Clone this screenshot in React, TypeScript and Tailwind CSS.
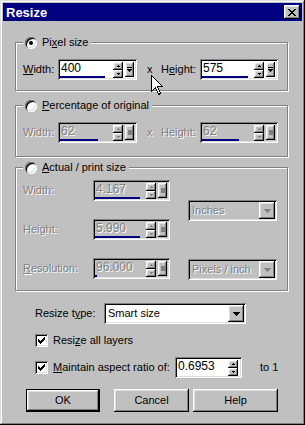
import React, { FC, ReactNode } from "react";

const raised =
  "shadow-[inset_-1px_-1px_#000,inset_1px_1px_#fff,inset_-2px_-2px_#808080,inset_2px_2px_#dfdfdf]";
const sunken =
  "shadow-[inset_1px_1px_#808080,inset_-1px_-1px_#fff,inset_2px_2px_#000,inset_-2px_-2px_#dfdfdf]";
const dim = "text-[#808080] [text-shadow:1px_1px_#fff]";

const Tri: FC<{ up?: boolean; disabled?: boolean; size?: number }> = ({ up, disabled, size = 5 }) => {
  const h = Math.ceil(size / 2);
  const pts = up ? `0,${h} ${size},${h} ${size / 2},0` : `0,0 ${size},0 ${size / 2},${h}`;
  return (
    <svg width={size} height={h} viewBox={`0 0 ${size} ${h}`} shapeRendering="crispEdges">
      <polygon points={pts} fill={disabled ? "#808080" : "#000"} />
    </svg>
  );
};

const Radio: FC<{ checked?: boolean }> = ({ checked }) => (
  <div className={`w-[12px] h-[12px] rounded-full bg-white flex items-center justify-center ${sunken}`}>
    {checked && <div className="w-[4px] h-[4px] rounded-full bg-black" />}
  </div>
);

const Check: FC = () => (
  <div className={`w-[13px] h-[13px] bg-white flex items-center justify-center ${sunken}`}>
    <svg width="7" height="7" viewBox="0 0 7 7" shapeRendering="crispEdges">
      <path d="M0 2h1v1h1v1h1v-1h1v-1h1v-1h1v-1h1v3h-1v1h-1v1h-1v1h-1v1h-1v-1h-1v-1h-1z" fill="#000" />
    </svg>
  </div>
);

// spin field with optional popup slider button
const SpinBox: FC<{
  value: string;
  w: string;
  bar: string;
  disabled?: boolean;
  popup?: boolean;
}> = ({ value, w, bar, disabled, popup = true }) => (
  <div className={`flex h-[21px] p-[2px] ${w} ${disabled ? "bg-[#c0c0c0]" : "bg-white"} ${sunken}`}>
    <div className="flex-1 flex flex-col justify-between min-w-0">
      <span className={`pl-[1px] text-[12px] leading-[15px] ${disabled ? dim : "text-black"}`}>{value}</span>
      <div className={`h-[2px] bg-[#000080] ${bar}`} />
    </div>
    <div className="flex flex-col justify-center mr-[2px]">
      <div className={`w-[10px] h-[8px] bg-[#c0c0c0] flex items-center justify-center ${raised}`}>
        <Tri up disabled={disabled} size={4} />
      </div>
      <div className={`w-[10px] h-[8px] bg-[#c0c0c0] flex items-center justify-center ${raised}`}>
        <Tri disabled={disabled} size={4} />
      </div>
    </div>
    {popup && (
      <div className={`w-[9px] h-[15px] self-center mr-[1px] bg-[#c0c0c0] flex flex-col items-center justify-center gap-[1px] ${raised}`}>
        {disabled ? (
          <div className="w-[4px] h-[5px] bg-[#808080]" />
        ) : (
          <>
            <div className="w-[5px] h-[1px] bg-black" />
            <Tri size={5} />
          </>
        )}
      </div>
    )}
  </div>
);

const Combo: FC<{ value: string; w: string; disabled?: boolean }> = ({ value, w, disabled }) => (
  <div className={`flex items-center h-[21px] p-[2px] ${w} ${disabled ? "bg-[#c0c0c0]" : "bg-white"} ${sunken}`}>
    <span className={`flex-1 pl-[2px] whitespace-nowrap ${disabled ? dim : "text-black"}`}>{value}</span>
    <div className={`w-[16px] h-[17px] bg-[#c0c0c0] flex items-center justify-center ${raised}`}>
      <Tri disabled={disabled} size={7} />
    </div>
  </div>
);

const Group: FC<{ label: ReactNode; checked?: boolean; cls: string; children: ReactNode }> = ({
  label,
  checked,
  cls,
  children,
}) => (
  <div className={`ml-[15px] w-[273px] border border-[#808080] shadow-[inset_1px_1px_#fff,1px_1px_#fff] ${cls}`}>
    <div className="-mt-[7px] ml-[7px] w-fit h-[13px] pl-[2px] pr-[3px] bg-[#c0c0c0] flex items-center gap-[5px]">
      <Radio checked={checked} />
      <span className="leading-[13px]">{label}</span>
    </div>
    {children}
  </div>
);

const Btn: FC<{ children: ReactNode; cls: string; def?: boolean }> = ({ children, cls, def }) => (
  <div className={`h-[23px] flex items-center justify-center bg-[#c0c0c0] ${cls} ${def ? "border border-black" : ""}`}>
    <div className={`w-full h-full flex items-center justify-center ${raised}`}>{children}</div>
  </div>
);

const App: FC = () => {
  return (
    <div
      className={`relative w-[305px] h-[425px] bg-[#c0c0c0] p-[3px] font-['Liberation_Sans',Arial,sans-serif] text-[11px] text-black shadow-[inset_-1px_-1px_#000,inset_1px_1px_#dfdfdf,inset_-2px_-2px_#808080,inset_2px_2px_#fff] overflow-hidden`}
    >
      {/* Title bar */}
      <div className="h-[18px] bg-[#000080] flex items-center justify-between pl-[3px] pr-[2px]">
        <span className="text-white font-bold text-[13px] leading-none">Resize</span>
        <div className={`w-[16px] h-[14px] bg-[#c0c0c0] flex items-center justify-center ${raised}`}>
          <svg width="8" height="7" viewBox="0 0 8 7" shapeRendering="crispEdges">
            <path d="M0 0h2v1h1v1h2v-1h1v-1h2v1h-1v1h-1v1h-1v1h1v1h1v1h1v1h-2v-1h-1v-1h-2v1h-1v1h-2v-1h1v-1h1v-1h1v-1h-1v-1h-1v-1h-1z" fill="#000" />
          </svg>
        </div>
      </div>

      <div className="-ml-[3px]">
        {/* Pixel size */}
        <Group
          checked
          cls="mt-[21px] h-[49px]"
          label={
            <>
              Pi<u>x</u>el size
            </>
          }
        >
          <div className="flex items-center mt-[10px] ml-[7px]">
            <span className="w-[35px]">
              <u>W</u>idth:
            </span>
            <SpinBox value="400" w="w-[79px]" bar="w-[45px]" />
            <span className="w-[10px]" />
            <span className="w-[14px]">x</span>
            <span className="w-[39px]">
              H<u>e</u>ight:
            </span>
            <SpinBox value="575" w="w-[78px]" bar="w-[46px]" />
          </div>
        </Group>

        {/* Percentage */}
        <Group
          cls="mt-[14px] h-[52px]"
          label={
            <>
              <u>P</u>ercentage of original
            </>
          }
        >
          <div className="flex items-center mt-[10px] ml-[7px]">
            <span className={`w-[35px] ${dim}`}>Width:</span>
            <SpinBox value="62" w="w-[79px]" bar="w-[38px]" disabled />
            <span className="w-[10px]" />
            <span className={`w-[14px] ${dim}`}>x</span>
            <span className={`w-[39px] ${dim}`}>Height:</span>
            <SpinBox value="62" w="w-[78px]" bar="w-[37px]" disabled />
          </div>
        </Group>

        {/* Actual / print size */}
        <Group
          cls="mt-[10px] h-[124px]"
          label={
            <>
              <u>A</u>ctual / print size
            </>
          }
        >
          <div className="flex ml-[7px]">
            <div className="flex flex-col w-[147px]">
              <div className="flex items-center mt-[6px]">
                <span className={`w-[70px] ${dim}`}>Width:</span>
                <SpinBox value="4.167" w="w-[77px]" bar="w-[45px]" disabled />
              </div>
              <div className="flex items-center mt-[18px]">
                <span className={`w-[70px] ${dim}`}>Height:</span>
                <SpinBox value="5.990" w="w-[77px]" bar="w-[45px]" disabled />
              </div>
              <div className="flex items-center mt-[18px]">
                <span className={`w-[70px] ${dim}`}>
                  <u>R</u>esolution:
                </span>
                <SpinBox value="96.000" w="w-[77px]" bar="w-[2px]" disabled />
              </div>
            </div>
            <div className="flex flex-col ml-[18px]">
              <div className="mt-[26px]">
                <Combo value="Inches" w="w-[89px]" disabled />
              </div>
              <div className="mt-[38px]">
                <Combo value="Pixels / inch" w="w-[89px]" disabled />
              </div>
            </div>
          </div>
        </Group>

        {/* Resize type */}
        <div className="flex items-center mt-[12px] ml-[35px]">
          <span className="w-[69px]">
            Resize t<u>y</u>pe:
          </span>
          <Combo value="Smart size" w="w-[142px]" />
        </div>

        <div className="flex items-center mt-[10px] ml-[35px] h-[13px] gap-[5px]">
          <Check />
          <span>
            Resi<u>z</u>e all layers
          </span>
        </div>

        <div className="flex items-center mt-[10px] ml-[35px] h-[21px]">
          <Check />
          <span className="ml-[5px] w-[122px]">
            <u>M</u>aintain aspect ratio of:
          </span>
          <SpinBox value="0.6953" w="w-[67px]" bar="w-0 h-0" popup={false} />
          <span className="ml-[18px]">to 1</span>
        </div>

        {/* Buttons */}
        <div className="flex mt-[11px] ml-[26px]">
          <Btn cls="w-[74px]" def>
            OK
          </Btn>
          <Btn cls="w-[75px] ml-[14px]">Cancel</Btn>
          <Btn cls="w-[85px] ml-[4px]">Help</Btn>
        </div>
      </div>

      {/* mouse cursor over the dialog */}
      <svg className="absolute left-[151px] top-[75px]" width="13" height="21" viewBox="0 0 13 21" shapeRendering="crispEdges">
        <path d="M0.5 0.5 L0.5 16.5 L4.5 12.5 L7.5 19.5 L9.5 18.5 L6.5 11.5 L11.5 11.5 Z" fill="#fff" stroke="#000" />
      </svg>
    </div>
  );
};

export default App;
